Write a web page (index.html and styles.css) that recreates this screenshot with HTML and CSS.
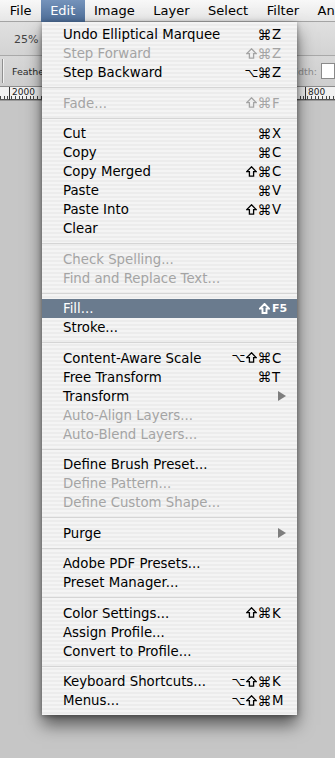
FILE: index.html
```html
<!DOCTYPE html>
<html>
<head>
<meta charset="utf-8">
<link rel="stylesheet" href="styles.css">
</head>
<body>
<div class="screen">
  <div class="menubar">
    <span class="mb-item">File</span>
    <span class="mb-item active">Edit</span>
    <span class="mb-item">Image</span>
    <span class="mb-item">Layer</span>
    <span class="mb-item">Select</span>
    <span class="mb-item">Filter</span>
    <span class="mb-item">An</span>
  </div>
  <div class="toolbar"><span class="zoom">25%</span></div>
  <div class="optbar">
    <span class="divider"></span>
    <span class="opt-label">Feather:</span>
    <span class="opt-spacer"></span>
    <span class="opt-label dim">Width:</span>
    <span class="opt-input"></span>
  </div>
  <div class="ruler">
    <span class="major first">2000</span>
    <span class="major last">800</span>
  </div>
  <div class="canvas"></div>

  <div class="menu">
    <div class="mi"><span class="lb">Undo Elliptical Marquee</span><span class="sc"><span class="mods"><i>⌘</i></span><span class="key">Z</span></span></div>
    <div class="mi dis"><span class="lb">Step Forward</span><span class="sc"><span class="mods"><i class="sh"><svg viewBox="0 0 11 11"><path d="M5.5 0.8 L10.2 5.6 H7.6 V10.2 H3.4 V5.6 H0.8 Z"/></svg></i><i>⌘</i></span><span class="key">Z</span></span></div>
    <div class="mi"><span class="lb">Step Backward</span><span class="sc"><span class="mods"><i class="alt">⌥</i><i>⌘</i></span><span class="key">Z</span></span></div>
    <div class="sep"></div>
    <div class="mi dis"><span class="lb">Fade...</span><span class="sc"><span class="mods"><i class="sh"><svg viewBox="0 0 11 11"><path d="M5.5 0.8 L10.2 5.6 H7.6 V10.2 H3.4 V5.6 H0.8 Z"/></svg></i><i>⌘</i></span><span class="key">F</span></span></div>
    <div class="sep"></div>
    <div class="mi"><span class="lb">Cut</span><span class="sc"><span class="mods"><i>⌘</i></span><span class="key">X</span></span></div>
    <div class="mi"><span class="lb">Copy</span><span class="sc"><span class="mods"><i>⌘</i></span><span class="key">C</span></span></div>
    <div class="mi"><span class="lb">Copy Merged</span><span class="sc"><span class="mods"><i class="sh"><svg viewBox="0 0 11 11"><path d="M5.5 0.8 L10.2 5.6 H7.6 V10.2 H3.4 V5.6 H0.8 Z"/></svg></i><i>⌘</i></span><span class="key">C</span></span></div>
    <div class="mi"><span class="lb">Paste</span><span class="sc"><span class="mods"><i>⌘</i></span><span class="key">V</span></span></div>
    <div class="mi"><span class="lb">Paste Into</span><span class="sc"><span class="mods"><i class="sh"><svg viewBox="0 0 11 11"><path d="M5.5 0.8 L10.2 5.6 H7.6 V10.2 H3.4 V5.6 H0.8 Z"/></svg></i><i>⌘</i></span><span class="key">V</span></span></div>
    <div class="mi"><span class="lb">Clear</span></div>
    <div class="sep"></div>
    <div class="mi dis"><span class="lb">Check Spelling...</span></div>
    <div class="mi dis"><span class="lb">Find and Replace Text...</span></div>
    <div class="sep"></div>
    <div class="mi hl"><span class="lb">Fill...</span><span class="sc"><span class="mods"><i class="sh bold"><svg viewBox="0 0 11 11"><path d="M5.5 1 L10 5.6 H7.5 V10 H3.5 V5.6 H1 Z"/></svg></i></span><span class="key fkey">F5</span></span></div>
    <div class="mi"><span class="lb">Stroke...</span></div>
    <div class="sep"></div>
    <div class="mi"><span class="lb">Content-Aware Scale</span><span class="sc"><span class="mods"><i class="alt">⌥</i><i class="sh"><svg viewBox="0 0 11 11"><path d="M5.5 0.8 L10.2 5.6 H7.6 V10.2 H3.4 V5.6 H0.8 Z"/></svg></i><i>⌘</i></span><span class="key">C</span></span></div>
    <div class="mi"><span class="lb">Free Transform</span><span class="sc"><span class="mods"><i>⌘</i></span><span class="key">T</span></span></div>
    <div class="mi"><span class="lb">Transform</span><span class="arrow"></span></div>
    <div class="mi dis"><span class="lb">Auto-Align Layers...</span></div>
    <div class="mi dis"><span class="lb">Auto-Blend Layers...</span></div>
    <div class="sep"></div>
    <div class="mi"><span class="lb">Define Brush Preset...</span></div>
    <div class="mi dis"><span class="lb">Define Pattern...</span></div>
    <div class="mi dis"><span class="lb">Define Custom Shape...</span></div>
    <div class="sep"></div>
    <div class="mi"><span class="lb">Purge</span><span class="arrow"></span></div>
    <div class="sep"></div>
    <div class="mi"><span class="lb">Adobe PDF Presets...</span></div>
    <div class="mi"><span class="lb">Preset Manager...</span></div>
    <div class="sep"></div>
    <div class="mi"><span class="lb">Color Settings...</span><span class="sc"><span class="mods"><i class="sh"><svg viewBox="0 0 11 11"><path d="M5.5 0.8 L10.2 5.6 H7.6 V10.2 H3.4 V5.6 H0.8 Z"/></svg></i><i>⌘</i></span><span class="key">K</span></span></div>
    <div class="mi"><span class="lb">Assign Profile...</span></div>
    <div class="mi"><span class="lb">Convert to Profile...</span></div>
    <div class="sep"></div>
    <div class="mi"><span class="lb">Keyboard Shortcuts...</span><span class="sc"><span class="mods"><i class="alt">⌥</i><i class="sh"><svg viewBox="0 0 11 11"><path d="M5.5 0.8 L10.2 5.6 H7.6 V10.2 H3.4 V5.6 H0.8 Z"/></svg></i><i>⌘</i></span><span class="key">K</span></span></div>
    <div class="mi"><span class="lb">Menus...</span><span class="sc"><span class="mods"><i class="alt">⌥</i><i class="sh"><svg viewBox="0 0 11 11"><path d="M5.5 0.8 L10.2 5.6 H7.6 V10.2 H3.4 V5.6 H0.8 Z"/></svg></i><i>⌘</i></span><span class="key">M</span></span></div>
  </div>
</div>
</body>
</html>
```

FILE: styles.css
```css
html, body {
  margin: 0;
  padding: 0;
}
body {
  width: 335px;
  height: 758px;
  overflow: hidden;
  background: #c6c6c6;
  font-family: "DejaVu Sans", "Liberation Sans", sans-serif;
}
.screen {
  position: relative;
  width: 335px;
  height: 758px;
  display: flex;
  flex-direction: column;
  overflow: hidden;
}

/* menubar */
.menubar {
  height: 22px;
  box-sizing: border-box;
  display: flex;
  padding-left: 0.5px;
  background: linear-gradient(#f8f8f8, #e6e6e6);
  border-bottom: 1px solid #a4a4a4;
  font-size: 13px;
  line-height: 22px;
  color: #000;
  white-space: nowrap;
}
.mb-item {
  padding: 0 9.3px;
  height: 22px;
}
.mb-item.active {
  background: linear-gradient(#7593bb, #4c6c96);
  color: #fff;
}

/* photoshop bars behind menu */
.toolbar {
  height: 34px;
  box-sizing: border-box;
  display: flex;
  align-items: center;
  padding-left: 14px;
  background: linear-gradient(#e0e0e0, #d3d3d3);
  border-bottom: 1px solid #a9a9a9;
}
.zoom {
  font-size: 11px;
  color: #444;
  margin-top: 1px;
}
.optbar {
  height: 31px;
  box-sizing: border-box;
  display: flex;
  align-items: center;
  background: linear-gradient(#d8d8d8, #cecece);
  border-bottom: 1px solid #8c8c8c;
}
.divider {
  width: 1px;
  height: 24px;
  margin-left: 2px;
  margin-right: 9px;
  background: #8f8f8f;
  box-shadow: 1px 0 0 #f2f2f2;
}
.opt-label {
  font-size: 9.5px;
  color: #2a2a2a;
}
.opt-label.dim {
  color: #8a8a8a;
}
.opt-spacer {
  flex: 1;
}
.opt-input {
  width: 14px;
  height: 16px;
  margin-left: 4px;
  box-sizing: border-box;
  background: #fff;
  border: 1px solid #8a8a8a;
}
.ruler {
  height: 14px;
  box-sizing: border-box;
  display: flex;
  background-color: #f1f1f1;
  background-image:
    linear-gradient(#555, #555),
    repeating-linear-gradient(to right, #444 0, #444 1px, transparent 1px, transparent 3.7px);
  background-size: 100% 1px, 100% 4px;
  background-position: 0 12px, 0 100%;
  background-repeat: no-repeat;
  border-bottom: 1px solid #9a9a9a;
  font-size: 9px;
  line-height: 10px;
  color: #222;
}
.major {
  border-left: 1px solid #333;
  padding-left: 2px;
  height: 13px;
  box-sizing: border-box;
}
.major.first {
  margin-left: 9px;
}
.major.last {
  margin-left: auto;
  width: 30px;
}
.canvas {
  flex: 1;
  background: #c6c6c6;
}

/* dropdown menu */
.menu {
  position: absolute;
  left: 42px;
  top: 22px;
  width: 255px;
  padding: 3px 0 4.5px;
  background: repeating-linear-gradient(to bottom, #f4f4f4 0, #f4f4f4 2px, #ececec 2px, #ececec 4px);
  box-shadow: 0 10px 16px rgba(0, 0, 0, 0.55), 0 1px 5px rgba(0, 0, 0, 0.35);
  font-size: 13.3px;
  color: #000;
}
.mi {
  display: flex;
  align-items: center;
  height: 19px;
  padding: 0 11px 0 21px;
  white-space: nowrap;
}
.mi .lb {
  flex: 1;
}
.mi.dis {
  color: #a4a4a4;
}
.mi.hl {
  background: #6a7b8e;
  color: #fff;
}
.sc {
  display: flex;
  align-items: center;
}
.mods {
  display: flex;
  align-items: center;
}
.mods i {
  font-style: normal;
  display: inline-flex;
  justify-content: center;
  align-items: center;
  width: 13px;
  font-size: 14px;
  overflow: visible;
}
.mods i.alt {
  font-size: 12px;
}
.mods i.sh svg {
  width: 11px;
  height: 11px;
  fill: none;
  stroke: currentColor;
  stroke-width: 1.3;
  stroke-linejoin: miter;
  margin-top: -1px;
}
.mods i.sh.bold svg {
  stroke-width: 1.9;
}
.key {
  width: 15px;
  padding-left: 1px;
  box-sizing: border-box;
}
.fkey {
  font-size: 11px;
  font-weight: bold;
}
.arrow {
  width: 0;
  height: 0;
  border-left: 8px solid #7e7e7e;
  border-top: 5px solid transparent;
  border-bottom: 5px solid transparent;
}
.sep {
  height: 11.5px;
  display: flex;
  align-items: center;
}
.sep::before {
  content: "";
  flex: 1;
  height: 1px;
  background: #d5d5d5;
}
```
